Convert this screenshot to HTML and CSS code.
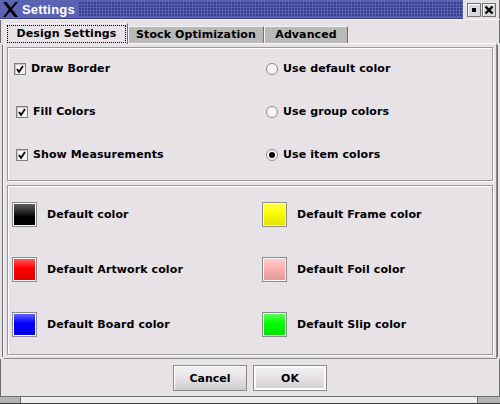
FILE: index.html
```html
<!DOCTYPE html>
<html>
<head>
<meta charset="utf-8">
<link rel="stylesheet" href="styles.css">
</head>
<body>
<div class="window">
  <div class="titlebar">
    <div class="title-main">
      <svg class="xlogo" width="15" height="15" viewBox="0 0 15 15"><polygon points="0,0 3.5,0 15,15 11.5,15" fill="#000"/><polygon points="12.5,0 15,0 2.5,15 0,15" fill="#000"/><polygon points="5,7.5 6.5,9 4,11" fill="#000"/></svg>
      <span class="title">Settings</span>
      <div class="dots"></div>
    </div>
    <div class="tbtns">
      <span class="tbtn"><span class="sq"></span></span>
      <span class="tbtn"><svg width="10" height="10" viewBox="0 0 10 10"><path d="M1.5 1.5 L8.5 8.5 M8.5 1.5 L1.5 8.5" stroke="#000" stroke-width="2.4"/></svg></span>
    </div>
  </div>
  <div class="tabs">
    <div class="tab active"><span class="focus">Design Settings</span></div>
    <div class="tab t2">Stock Optimization</div>
    <div class="tab t3">Advanced</div>
  </div>
  <div class="panel">
    <div class="section options">
      <label class="opt"><span class="check"><svg width="10" height="10" viewBox="0 0 10 10"><path d="M2 5 L4 8 L8 2" stroke="#000" stroke-width="1.8" fill="none"/></svg></span>Draw Border</label>
      <label class="opt"><span class="radio"></span>Use default color</label>
      <label class="opt shift"><span class="check"><svg width="10" height="10" viewBox="0 0 10 10"><path d="M2 5 L4 8 L8 2" stroke="#000" stroke-width="1.8" fill="none"/></svg></span>Fill Colors</label>
      <label class="opt"><span class="radio"></span>Use group colors</label>
      <label class="opt shift"><span class="check"><svg width="10" height="10" viewBox="0 0 10 10"><path d="M2 5 L4 8 L8 2" stroke="#000" stroke-width="1.8" fill="none"/></svg></span>Show Measurements</label>
      <label class="opt"><span class="radio on"></span>Use item colors</label>
    </div>
    <div class="section colors">
      <div class="crow"><span class="sw black"></span>Default color</div>
      <div class="crow"><span class="sw yellow"></span>Default Frame color</div>
      <div class="crow"><span class="sw red"></span>Default Artwork color</div>
      <div class="crow"><span class="sw pink"></span>Default Foil color</div>
      <div class="crow"><span class="sw blue"></span>Default Board color</div>
      <div class="crow"><span class="sw green"></span>Default Slip color</div>
    </div>
  </div>
  <div class="buttons">
    <button class="btn">Cancel</button>
    <button class="btn ok">OK</button>
  </div>
  <div class="bottom">
    <span class="grip"></span>
    <span class="mid"></span>
    <span class="grip right"></span>
  </div>
</div>
</body>
</html>
```

FILE: styles.css
```css
html, body {
  margin: 0;
  padding: 0;
  background: #e6e2e6;
}
.window {
  width: 500px;
  height: 404px;
  box-sizing: border-box;
  background: #e6e2e6;
  display: flex;
  flex-direction: column;
  font-family: "DejaVu Sans", sans-serif;
  font-weight: bold;
  font-size: 11px;
  letter-spacing: 0.1px;
  color: #000;
  overflow: hidden;
}
.titlebar {
  height: 19px;
  display: flex;
  flex-shrink: 0;
  border-bottom: 1px solid #f4f2f4;
}
.title-main {
  flex: 1;
  display: flex;
  align-items: center;
  background: #5a62b2;
  border-bottom: 1px solid #3c4290;
  padding-left: 3px;
}
.xlogo {
  display: block;
  flex-shrink: 0;
}
.title {
  font-family: "Liberation Sans", Arial, sans-serif;
  font-size: 13px;
  font-weight: bold;
  letter-spacing: 0.2px;
  color: #fff;
  margin-left: 4px;
  margin-right: 4px;
}
.dots {
  flex: 1;
  height: 14px;
  background-image: radial-gradient(circle at 1px 1px, #363c8c 0.9px, transparent 1.1px);
  background-size: 3px 3px;
}
.tbtns {
  width: 37px;
  display: flex;
  gap: 1px;
  align-items: center;
  padding-left: 4px;
  box-sizing: border-box;
  background: #e6e2e6;
  border-right: 1px solid #6e6e6e;
}
.tbtn {
  width: 14px;
  height: 14px;
  box-sizing: border-box;
  border: 1px solid #707070;
  box-shadow: inset 1px 1px 0 #fff;
  background: #d8d6d8;
  display: flex;
  align-items: center;
  justify-content: center;
}
.sq {
  width: 4px;
  height: 4px;
  background: #000;
}
.tabs {
  height: 23px;
  display: flex;
  align-items: flex-end;
  padding-left: 4px;
  flex-shrink: 0;
  border-left: 1px solid #6e6e6e;
  border-right: 1px solid #6e6e6e;
}
.tab {
  height: 17px;
  box-sizing: border-box;
  background: #b9b9b9;
  border-top: 1px solid #f2f2f2;
  border-left: 1px solid #f2f2f2;
  border-right: 1px solid #707070;
  display: flex;
  align-items: center;
  justify-content: center;
  padding-bottom: 1px;
}
.tab.active {
  width: 123px;
  height: 21px;
  background: #e6e2e6;
  margin-bottom: -1px;
  position: relative;
  z-index: 1;
  padding: 1px 1px 1px 1px;
  align-items: stretch;
}
.focus {
  flex: 1;
  border: 1px dotted #000;
  display: flex;
  align-items: center;
  justify-content: center;
  padding-bottom: 1px;
}
.t2 { width: 136px; }
.t3 { width: 84px; }
.panel {
  margin: 0 3px;
  height: 316px;
  box-sizing: border-box;
  border: 1px solid #8a8a8a;
  border-top-color: #fafafa;
  border-left-color: #fafafa;
  padding: 3px;
  display: flex;
  flex-direction: column;
  gap: 4px;
  flex-shrink: 0;
  box-shadow: -3px 0 0 -2px #6e6e6e, 3px 0 0 -2px #6e6e6e;
}
.section {
  box-sizing: border-box;
  border: 1px solid #9a9a9a;
  box-shadow: inset 1px 1px 0 #fff, 1px 1px 0 #fff;
  display: grid;
}
.options {
  height: 134px;
  grid-template-columns: 252px 1fr;
  grid-template-rows: repeat(3, 43px);
  padding: 0 0 0 6px;
}
.colors {
  height: 170px;
  grid-template-columns: 250px 1fr;
  grid-template-rows: repeat(3, 55px);
  padding: 1px 0 0 4px;
}
.opt {
  display: flex;
  align-items: center;
  padding-bottom: 2px;
}
.opt.shift {
  padding-left: 2px;
}
.check {
  width: 12px;
  height: 12px;
  box-sizing: border-box;
  border: 1px solid #808080;
  box-shadow: inset 1px 1px 0 #c8c8c8;
  background: #f4f2f4;
  display: flex;
  align-items: center;
  justify-content: center;
  margin-right: 5px;
}
.radio {
  width: 12px;
  height: 12px;
  box-sizing: border-box;
  border: 1px solid #8a8a8a;
  border-radius: 50%;
  background: #f6f4f6;
  margin-right: 5px;
  display: flex;
  align-items: center;
  justify-content: center;
}
.radio.on::after {
  content: "";
  width: 6px;
  height: 6px;
  border-radius: 50%;
  background: #000;
}
.crow {
  display: flex;
  align-items: center;
  gap: 10px;
}
.sw {
  width: 25px;
  height: 25px;
  box-sizing: border-box;
  border: 1px solid #8c8c8c;
  box-shadow: inset 0 0 0 1px #f8f8f8;
}
.black { background: linear-gradient(#5a5a5a 2px, #000 14px); }
.red { background: linear-gradient(#ff5050 2px, #ff0000 10px, #e00000); }
.blue { background: linear-gradient(#5a5aff 2px, #0000ff 10px, #0000e0); }
.yellow { background: linear-gradient(#ffff40 2px, #ffff00 10px, #e0e000); }
.pink { background: linear-gradient(#ffc8c8 2px, #ffb0b0 10px, #e09898); }
.green { background: linear-gradient(#50ff50 2px, #00ff00 10px, #00e000); }
.buttons {
  flex: 1;
  display: flex;
  justify-content: center;
  align-items: center;
  gap: 6px;
  padding-top: 1px;
  border-left: 1px solid #6e6e6e;
  border-right: 1px solid #6e6e6e;
}
.btn {
  width: 74px;
  height: 26px;
  box-sizing: border-box;
  font-family: "DejaVu Sans", sans-serif;
  font-weight: bold;
  font-size: 11px;
  color: #000;
  border: 1px solid #8a8a8a;
  box-shadow: inset 1px 1px 0 #fff;
  background: linear-gradient(#f2f0f2, #e6e2e6 50%, #cfcccf);
  padding: 0;
}
.btn.ok {
  border-color: #8a8a8a;
  box-shadow: inset 1px 1px 0 #fff, inset 0 0 0 2px #fafafa;
}
.bottom {
  height: 8px;
  flex-shrink: 0;
  display: flex;
  border-top: 1px solid #6e6e6e;
  border-bottom: 1px solid #3a3a3a;
  box-sizing: border-box;
}
.grip {
  width: 20px;
  background: #b4b4b4;
  border-right: 1px solid #6e6e6e;
}
.grip.right {
  width: 22px;
  border-right: none;
  border-left: 1px solid #6e6e6e;
}
.mid {
  flex: 1;
  background: #eeeeee;
}
```
